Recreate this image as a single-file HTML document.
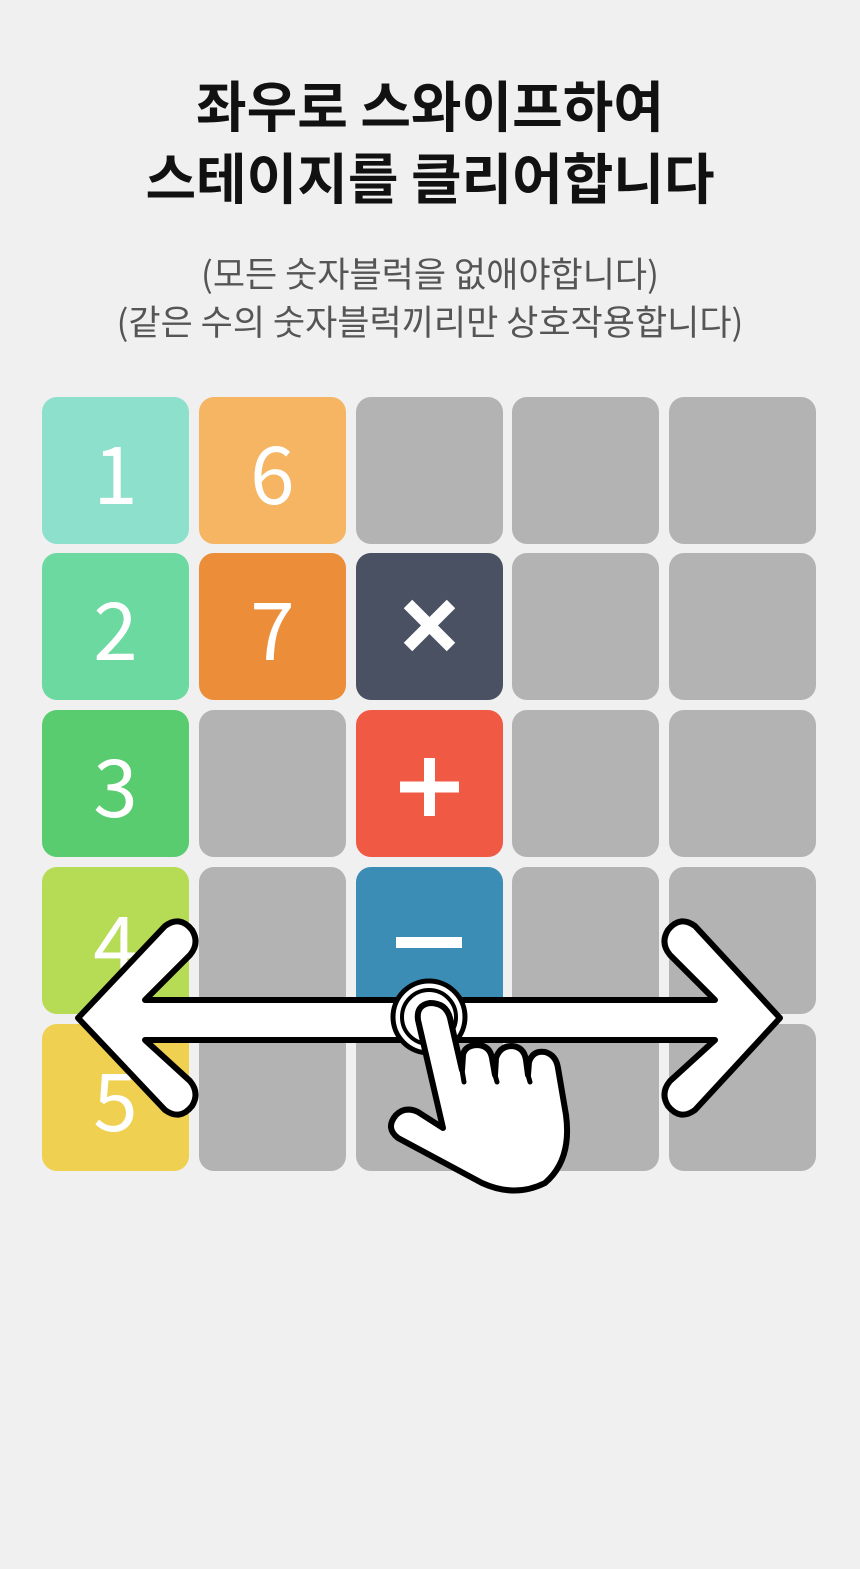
<!DOCTYPE html>
<html><head><meta charset="utf-8"><style>
html,body{margin:0;padding:0}
body{width:860px;height:1569px;background:#f0f0f0;position:relative;overflow:hidden;font-family:"Noto Sans CJK KR","Liberation Sans",sans-serif}
.t{position:absolute;left:0;width:860px;text-align:center;font-weight:bold;color:#111;font-size:55px;letter-spacing:0;line-height:70px}
.s{position:absolute;left:0;width:860px;text-align:center;color:#555;font-size:35px;letter-spacing:0;line-height:46px}
.c{position:absolute;width:147px;height:147px;border-radius:15px;background:#b3b3b3;color:#fff;font-size:80px;text-align:center;line-height:147px}
</style></head><body>
<div class="t" style="top:68px">좌우로 스와이프하여</div>
<div class="t" style="top:140px">스테이지를 클리어합니다</div>
<div class="s" style="top:250px">(모든 숫자블럭을 없애야합니다)</div>
<div class="s" style="top:298px">(같은 수의 숫자블럭끼리만 상호작용합니다)</div>

<div class="c" style="left:42px;top:397px;background:#8de0cc">1</div>
<div class="c" style="left:199px;top:397px;background:#f5b562">6</div>
<div class="c" style="left:356px;top:397px"></div>
<div class="c" style="left:512px;top:397px"></div>
<div class="c" style="left:669px;top:397px"></div>

<div class="c" style="left:42px;top:553px;background:#6cd9a0">2</div>
<div class="c" style="left:199px;top:553px;background:#ec8d3a">7</div>
<div class="c" style="left:356px;top:553px;background:#4a5163"><svg width="147" height="147" style="position:absolute;left:0;top:0"><path d="M52,51 L95,94 M95,51 L52,94" stroke="#fff" stroke-width="12"/></svg></div>
<div class="c" style="left:512px;top:553px"></div>
<div class="c" style="left:669px;top:553px"></div>

<div class="c" style="left:42px;top:710px;background:#58cc6e">3</div>
<div class="c" style="left:199px;top:710px"></div>
<div class="c" style="left:356px;top:710px;background:#f05a44"><svg width="147" height="147" style="position:absolute;left:0;top:0"><path d="M44,77 L103,77 M73.5,48 L73.5,106" stroke="#fff" stroke-width="11"/></svg></div>
<div class="c" style="left:512px;top:710px"></div>
<div class="c" style="left:669px;top:710px"></div>

<div class="c" style="left:42px;top:867px;background:#b6db55">4</div>
<div class="c" style="left:199px;top:867px"></div>
<div class="c" style="left:356px;top:867px;background:#3b8db5"><div style="position:absolute;left:40px;top:70px;width:66px;height:11px;background:#fff"></div></div>
<div class="c" style="left:512px;top:867px"></div>
<div class="c" style="left:669px;top:867px"></div>

<div class="c" style="left:42px;top:1024px;background:#efd050">5</div>
<div class="c" style="left:199px;top:1024px"></div>
<div class="c" style="left:356px;top:1024px"></div>
<div class="c" style="left:512px;top:1024px"></div>
<div class="c" style="left:669px;top:1024px"></div>

<svg width="860" height="1569" style="position:absolute;left:0;top:0">
<path d="M78,1018 L165,926 Q180,915 192,930 Q200,943 190,955 L145,1000 L715,1000 L670,955 Q660,943 668,930 Q680,915 695,926 L780,1018 L695,1110 Q680,1121 668,1106 Q660,1093 670,1081 L715,1040 L145,1040 L190,1081 Q200,1093 192,1106 Q180,1121 165,1110 Z" fill="#fff" stroke="#000" stroke-width="6" stroke-linejoin="round"/>
<circle cx="429" cy="1017" r="36" fill="#fff" stroke="#000" stroke-width="5"/>
<circle cx="429" cy="1017" r="27" fill="#fff" stroke="#000" stroke-width="4"/>
<path d="M443,1128 L418,1020 Q416,1005 430,1003 Q446,1003 450,1018 L462,1070 L463,1055 Q465,1045 478,1045 Q490,1046 492,1058 L495,1075 L496,1058 Q500,1046 512,1046 Q524,1047 526,1060 L528,1075 L529,1062 Q533,1050 545,1052 Q556,1055 558,1068 L566,1115 Q572,1160 545,1183 Q515,1198 482,1183 L398,1138 Q385,1128 396,1115 Q405,1106 418,1112 Z" fill="#fff" stroke="#000" stroke-width="6" stroke-linejoin="round"/>
<path d="M462,1070 L464,1082 M495,1075 L497,1082 M528,1075 L530,1082" stroke="#000" stroke-width="5" stroke-linecap="round"/>
</svg>
</body></html>
